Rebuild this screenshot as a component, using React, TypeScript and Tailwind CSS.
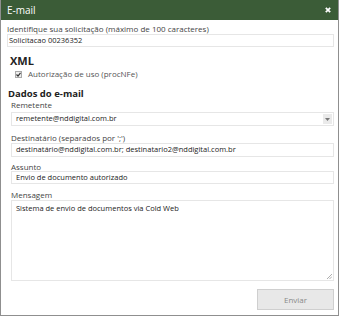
const font = { fontFamily: '"Open Sans", "Noto Sans", sans-serif' };

const Field = ({
	label,
	value,
	className = '',
	labelClass = 'h-[10px]',
	inputClass = 'h-[14px]',
}: {
	label: string;
	value: string;
	className?: string;
	labelClass?: string;
	inputClass?: string;
}) => (
	<div className={className}>
		<div className={`${labelClass} text-[8px] leading-[10px] text-[#444]`}>{label}</div>
		<div className={`${inputClass} flex items-center border border-[#e6e6e6] px-[4px] text-[7.5px] text-[#222]`}>{value}</div>
	</div>
);

const App = () => {
	return (
		<div className="h-[316px] w-[340px] bg-white" style={font}>
			<div className="flex h-[316px] w-[339px] flex-col border-x border-b border-[#8f8f8f]">
				<div className="flex h-[20px] shrink-0 items-center justify-between bg-[#3b5c37] pl-[6px] pr-[7px] text-white">
					<span className="text-[10px]">E-mail</span>
					<svg width="6" height="6" viewBox="0 0 6 6">
						<path d="M0.8 0.8 L5.2 5.2 M5.2 0.8 L0.8 5.2" stroke="white" strokeWidth="1.7" />
					</svg>
				</div>

				<div className="pl-[6px] pr-[4px] pt-[4px]">
					<div className="h-[10px] text-[8px] leading-[10px] text-[#444]">Identifique sua solicitação (máximo de 100 caracteres)</div>
					<div className="flex h-[13px] items-center border border-[#e6e6e6] px-[1px] text-[7.5px] text-[#222]">Solicitacao 00236352</div>

					<div className="ml-[3px] mt-[7px] h-[13px] text-[11px] font-bold leading-[13px] text-[#222]">XML</div>
					<div className="ml-[8px] mt-[2px] flex h-[10px] items-center gap-[6px] text-[8px] leading-[10px] text-[#555]">
						<span className="flex h-[7px] w-[7px] items-center justify-center border border-[#aaa] bg-[#eee]">
							<svg width="5" height="5" viewBox="0 0 5 5">
								<path d="M0.5 2.5 L2 4 L4.5 0.8" stroke="#333" strokeWidth="1.2" fill="none" />
							</svg>
						</span>
						Autorização de uso (procNFe)
					</div>

					<div className="ml-[1px] mt-[8px] h-[13px] text-[9.5px] font-bold leading-[13px] text-[#222]">Dados do e-mail</div>

					<div className="ml-[4px]">
						<div className="h-[10px] text-[8px] leading-[10px] text-[#444]">Remetente</div>
						<div className="mt-[2px] flex h-[14px] items-center justify-between border border-[#e6e6e6] pl-[4px] text-[7.5px] text-[#222]">
							<span>remetente@nddigital.com.br</span>
							<span className="mr-[1px] flex h-[10px] w-[9px] items-center justify-center bg-[#eaeaea]">
								<svg width="5" height="3" viewBox="0 0 5 3">
									<path d="M0 0 L5 0 L2.5 3 Z" fill="#777" />
								</svg>
							</span>
						</div>
					</div>

					<Field className="ml-[4px] mt-[7px]" label="Destinatário (separados por ';')" value="destinatário@nddigital.com.br; destinatario2@nddigital.com.br" />
					<Field className="ml-[4px] mt-[5px]" labelClass="h-[9px]" inputClass="h-[13px]" label="Assunto" value="Envio de documento autorizado" />

					<div className="ml-[4px] mt-[6px]">
						<div className="h-[10px] text-[8px] leading-[10px] text-[#444]">Mensagem</div>
						<div className="relative h-[81px] border border-[#e6e6e6] px-[4px] pt-[2px] text-[7.5px] text-[#222]">
							Sistema de envio de documentos via Cold Web
							<svg width="5" height="5" viewBox="0 0 5 5" className="absolute bottom-[1px] right-[1px]">
								<path d="M0 5 L5 0 M2.5 5 L5 2.5" stroke="#999" strokeWidth="0.8" />
							</svg>
						</div>
					</div>

					<div className="mt-[8px] flex justify-end">
						<button className="h-[21px] w-[77px] border border-[#cfcfcf] bg-[#e8e8e8] text-[8px] text-[#888]">Enviar</button>
					</div>
				</div>
			</div>
		</div>
	);
};

export default App;
